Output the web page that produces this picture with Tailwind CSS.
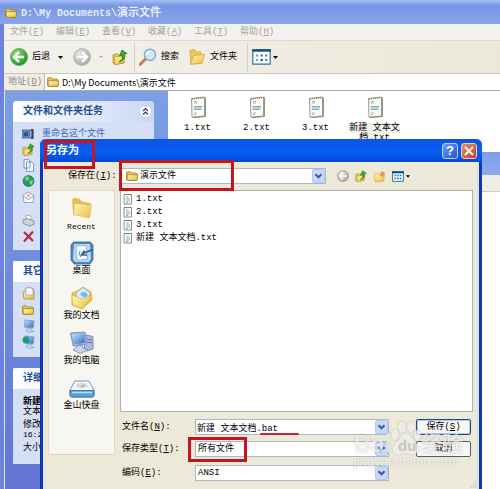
<!DOCTYPE html>
<html lang="zh-CN">
<head>
<meta charset="utf-8">
<meta name="viewport" content="width=device-width, initial-scale=1">
<title>另存为</title>
<script src="https://cdn.jsdelivr.net/npm/@tailwindcss/browser@4"></script>
</head>
<body class="relative h-screen overflow-hidden bg-white font-['Liberation_Mono','Noto_Sans_CJK_SC',monospace] text-[9px] leading-[12px] text-black">
<svg width="0" height="0" class="absolute" aria-hidden="true">
  <defs>
    <linearGradient id="gold" x1="0" y1="0" x2="1" y2="1"><stop offset="0" stop-color="#fff8b8"/><stop offset="1" stop-color="#e8bd45"/></linearGradient>
    <linearGradient id="blue" x1="0" y1="0" x2="1" y2="1"><stop offset="0" stop-color="#c4e8ff"/><stop offset="1" stop-color="#2868c8"/></linearGradient>
    <radialGradient id="green" cx=".35" cy=".3" r=".8"><stop offset="0" stop-color="#8fe07c"/><stop offset="1" stop-color="#188a1c"/></radialGradient>
    <radialGradient id="grey" cx=".35" cy=".3" r=".8"><stop offset="0" stop-color="#e4e4e4"/><stop offset="1" stop-color="#a4a4a4"/></radialGradient>
    <symbol id="folder" viewBox="0 0 12 10"><path d="M.5 2Q.5.7 1.7.7H4.4L5.6 2H10Q11 2 11 3V8.5Q11 9.4 10 9.4H1.6Q.5 9.4.5 8.3Z" fill="#e9c552" stroke="#a8801c" stroke-width=".8"/><path d="M1.2 3.7H11.4V8.3Q11.4 9.3 10.4 9.3H2.2Q1.2 9.3 1.2 8.3Z" fill="url(#gold)" stroke="#a07818" stroke-width=".7"/></symbol>
    <symbol id="openfolder" viewBox="0 0 20 20"><path d="M2 2.5 7.5 1.5 9 4.5 14 4 15 7V17H3Z" fill="#ecc95c" stroke="#cfa63a" stroke-width=".7"/><path d="M6.5 8.5 18.5 7 15.5 17 2.5 18.2Z" fill="url(#gold)" stroke="#d0a23a" stroke-width=".8"/></symbol>
    <symbol id="up" viewBox="0 0 16 16"><path d="M1 6 5 4.5 6.5 6 12 5V14L3 15.5 1 14Z" fill="#ebc84c" stroke="#a98a20" stroke-width=".7"/><path d="M2.5 8 13 6.5 12 14 3 15.5Z" fill="url(#gold)" stroke="#a98a20" stroke-width=".6"/><path d="M7 13Q11.5 11 10 6L7.5 7 10 1 15 4.5 12.6 5.2Q13.5 11.5 7 13Z" fill="#3fae2e" stroke="#16711a" stroke-width=".7"/></symbol>
    <symbol id="doc" viewBox="0 0 16 22"><path d="M1.5 2.5 14.5 1V20L2 21.2Z" fill="#fbfbf6" stroke="#9c9a88" stroke-width="1"/><path d="M14.5 1 15.5 2V20.5L2.8 21.7" fill="none" stroke="#77756a" stroke-width=".8"/><path d="M2 3 14 1.5" stroke="#8d7c63" stroke-width="1.5" stroke-dasharray="1 1"/><path d="M4 5.5H7M4 7H7M4 17H7M4 18.5H6" stroke="#a6aaa8" stroke-width=".9"/><path d="M3.8 10.5H12M3.8 12H12M3.8 13.5H11" stroke="#71a0b4" stroke-width=".9"/></symbol>
    <symbol id="note" viewBox="0 0 10 12"><path d="M1 1.5H8.5V11H1Z" fill="#fafaf8" stroke="#8c8f90"/><path d="M1 1.5H9" stroke="#706f68" stroke-dasharray="1 1"/><path d="M3 4H5.5M3 6H7M3 8H7M3 9.5H5" stroke="#7f9ea8" stroke-width=".8"/></symbol>
    <symbol id="views" viewBox="0 0 19 16"><path d="M.8.8H18.2V15.2H.8Z" fill="#f7faff" stroke="#3a70a8" stroke-width="1.2"/><path d="M.3 1.5H18.7" stroke="#144a8c" stroke-width="2.4"/><g stroke-width="1.8"><path d="M4 6.5H6M4 11H6" stroke="#8b9db0"/><path d="M8.7 6.5H10.7" stroke="#235a9a"/><path d="M8.7 11H10.7" stroke="#342028"/><path d="M13.2 6.5H15.2" stroke="#2b8b47"/><path d="M13.2 11H15.2" stroke="#4c6c9c"/></g></symbol>
    <symbol id="views-sm" viewBox="0 0 12 11"><path d="M.6.6H11.4V10.4H.6Z" fill="#eef8ff" stroke="#347a98"/><path d="M0 1.3H12" stroke="#124e88" stroke-width="2"/><path d="M2.5 4.5H10M2.5 7.5H10" stroke="#2677a6" stroke-width="1.6" stroke-dasharray="1.6 1"/></symbol>
    <symbol id="down" viewBox="0 0 13 14"><rect x=".5" y=".5" width="12" height="13" rx="1.5" fill="#c7d8fb" stroke="#b4c8f0"/><path d="M3.5 5.3 6.5 8.3 9.5 5.3" fill="none" stroke="#3c5c9c" stroke-width="2"/></symbol>
    <symbol id="monitor" viewBox="0 0 14 14"><path d="M3 1 12 2 11 9 2.5 8Z" fill="url(#blue)" stroke="#7393cb" stroke-width=".8"/><path d="M6 9 9 9.3V11L12 12.5 7 13.4 4 11.5Z" fill="#cad4ee" stroke="#7f90ba" stroke-width=".6"/></symbol>
  </defs>
</svg>

<!-- Explorer window -->
<div class="flex h-full flex-col border-l-4 border-[#6b83de] bg-white">
  <header class="-ml-1 flex h-6 shrink-0 items-center gap-1 bg-linear-to-b from-[#a5bdf6] via-[#7795e2] via-25% to-[#8ba6ea] pt-0.5 pl-[5px] font-bold text-[#e5edfd]">
    <svg class="h-[10px] w-3"><use href="#folder"/></svg>
    <h1 class="text-[11px] leading-[14px]"><span class="text-[10px]">D:\My Documents\</span>演示文件</h1>
  </header>
  <nav class="flex h-[17px] shrink-0 items-center border-b border-[#dedbd0] bg-[#f2f1ed] pl-1.5 text-[#a5a39a]">
    <button class="w-[46px] text-left">文件(<u>F</u>)</button>
    <button class="w-[46px] text-left">编辑(<u>E</u>)</button>
    <button class="w-[46px] text-left">查看(<u>V</u>)</button>
    <button class="w-[46px] text-left">收藏(<u>A</u>)</button>
    <button class="w-[46px] text-left">工具(<u>T</u>)</button>
    <button class="w-[46px] text-left">帮助(<u>H</u>)</button>
  </nav>
  <div class="flex h-[33px] shrink-0 items-center border-b border-[#c9c6b9] bg-linear-to-r from-[#f2f1ec] to-[#ece8d9] pl-1.5">
    <button class="flex w-[63px] items-center gap-1"><svg class="size-[18px]" viewBox="0 0 18 18"><circle cx="9" cy="9" r="8.5" fill="url(#green)" stroke="#3c9a3c" stroke-width=".7"/><path d="M9 4 4 9 9 14M4.5 9H14" fill="none" stroke="#fff" stroke-width="2.4"/></svg>后退<svg class="ml-1 h-[3px] w-[5px]" viewBox="0 0 5 3"><path d="M0 0H5L2.5 3Z"/></svg></button>
    <button aria-label="前进" class="flex w-[39px] items-center gap-2"><svg class="size-[18px]" viewBox="0 0 18 18"><circle cx="9" cy="9" r="8.5" fill="url(#grey)" stroke="#a9a9a9" stroke-width=".7"/><path d="M9 4 14 9 9 14M13.5 9H4" fill="none" stroke="#fff" stroke-width="2.4"/></svg><svg class="h-[2px] w-1" viewBox="0 0 4 2"><path d="M0 0H4L2 2Z" fill="#aaa"/></svg></button>
    <button aria-label="向上" class="w-[22px]"><svg class="size-4"><use href="#up"/></svg></button>
    <span class="h-7 w-[5px] border-l border-[#d3d0c4]"></span>
    <button class="flex w-[49px] items-center gap-1 whitespace-nowrap"><svg class="size-[18px] shrink-0" viewBox="0 0 18 18"><path d="M1 16.5 7 10.5" stroke="#c17b50" stroke-width="2.8" stroke-linecap="round"/><circle cx="11" cy="6.8" r="5.6" fill="#c9ecfb" stroke="#8ba9ca" stroke-width="1.5"/><path d="M7.8 7A3.5 3.5 0 0 1 11.5 3.5" fill="none" stroke="#fff" stroke-width="1.6"/></svg>搜索</button>
    <button class="flex w-[59px] items-center gap-1 whitespace-nowrap"><svg class="size-[18px] shrink-0"><use href="#openfolder"/></svg>文件夹</button>
    <span class="h-7 w-[5px] border-l border-[#d3d0c4]"></span>
    <button aria-label="查看方式" class="flex items-center gap-0.5"><svg class="h-4 w-[19px]"><use href="#views"/></svg><svg class="h-[3px] w-[5px]" viewBox="0 0 5 3"><path d="M0 0H5L2.5 3Z"/></svg></button>
  </div>
  <div class="flex h-[17px] shrink-0 items-center border-b border-[#aaa89c] bg-[#efede4]">
    <label for="address" class="w-10 pl-1 text-[#8b8980]">地址(<u>D</u>)</label>
    <div class="relative h-4 flex-1 border-l border-[#bdbbb0] bg-white">
      <svg class="absolute top-[3px] left-0.5 h-[10px] w-3"><use href="#folder"/></svg>
      <input id="address" value="D:\My Documents\演示文件" class="block h-4 w-full bg-transparent pl-[17px] font-['Noto_Sans_CJK_SC',sans-serif] outline-none">
    </div>
  </div>
  <div class="flex min-h-0 flex-1">
    <aside class="flex w-[164px] shrink-0 flex-col gap-[11px] border-l border-[#dbe4fb] bg-linear-to-b from-[#7c9fe6] to-[#6374d4] pt-[10px] pr-[14px] pl-2">
      <section class="h-[149px] shrink-0 overflow-hidden rounded-t bg-[#d5dff6]">
        <div class="flex h-[21px] items-center justify-between bg-linear-to-r from-white to-[#cbd7f7] px-[10px] text-[#24508f]">
          <h2 class="text-[10px] font-bold">文件和文件夹任务</h2>
          <button aria-label="折叠" class="-mr-2"><svg class="size-[13px]" viewBox="0 0 13 13"><circle cx="6.5" cy="6.5" r="6" fill="#fff" stroke="#b9c8e8" stroke-width=".7"/><path d="M4 6 6.5 3.5 9 6M4 9.5 6.5 7 9 9.5" fill="none" stroke="#263b70" stroke-width="1.2"/></svg></button>
        </div>
        <ul class="flex flex-col gap-[3px] pt-[5px] pl-[9px] text-[#3769bb]">
          <li class="flex h-[13px] items-center gap-[7px]"><svg class="h-3 w-[13px] shrink-0" viewBox="0 0 13 12"><path d="M0 2H8V10H0Z" fill="#6282bd" stroke="#405991" stroke-width=".7"/><path d="M2 4.5H6V8H2Z" fill="#294e98"/><path d="M8.5 2H11V10H8.5M10 1V11" fill="none" stroke="#345" stroke-width="1.3"/></svg><a href="#">重命名这个文件</a></li>
          <li class="h-[13px]"><svg class="size-[13px]"><use href="#up"/></svg></li>
          <li class="h-[13px]"><svg class="size-[13px]" viewBox="0 0 13 13"><path d="M2 .7H7L8 2V9H2ZM4.5 3H10L11.5 4.5V12.4H4.5Z" fill="#f6fbff" stroke="#5c88ac" stroke-width=".8"/></svg></li>
          <li class="h-[13px]"><svg class="size-[13px]" viewBox="0 0 13 13"><circle cx="6.5" cy="6" r="5.5" fill="#259b68" stroke="#286b93" stroke-width=".7"/><path d="M3 2.5Q5 1 7 2L6.5 5 4 6ZM7.5 6 11 5 10 9 8 10Z" fill="#7bd874"/></svg></li>
          <li class="h-[13px]"><svg class="size-[13px]" viewBox="0 0 13 13"><path d="M1 4 6 1 12 4.5 11 11.5H2Z" fill="#f8f8fb" stroke="#7d96bd" stroke-width=".8"/><path d="M1 5 6.5 8.5 12 5" fill="none" stroke="#89a3c5"/><path d="M5 3H8V6H5Z" fill="#efc37d"/></svg></li>
          <li class="mt-[7px] h-[13px]"><svg class="size-[13px]" viewBox="0 0 13 13"><path d="M4 1 9 2 8.5 6H4Z" fill="#fff" stroke="#929aa9" stroke-width=".7"/><path d="M1 6 5 4.5 12 7V10L8 12 1 9.5Z" fill="#cdd2da" stroke="#7c8799" stroke-width=".8"/></svg></li>
          <li class="h-[13px]"><svg class="size-[13px]" viewBox="0 0 13 13"><path d="M2 2 11 11M11 1.5 2 11.5" stroke="#bb2941" stroke-width="2.2"/></svg></li>
        </ul>
      </section>
      <section class="h-24 shrink-0 bg-[#d5dff6]">
        <h2 class="flex h-[21px] items-center rounded-t bg-linear-to-r from-white to-[#cbd7f7] px-[10px] text-[10px] font-bold text-[#24508f]">其它位置</h2>
        <ul class="flex flex-col gap-0.5 pt-[5px] pl-[9px]">
          <li><svg class="size-[14px]" viewBox="0 0 14 14"><path d="M1 5 4 4V1H10L12 3V12H2Z" fill="url(#gold)" stroke="#ad8e3b" stroke-width=".8"/><path d="M4 1H9L11 3V8H4Z" fill="#f4f9ff" stroke="#8da5b8" stroke-width=".6"/></svg></li>
          <li><svg class="h-[14px] w-3"><use href="#folder"/></svg></li>
          <li><svg class="size-[14px]"><use href="#monitor"/></svg></li>
          <li><svg class="size-[14px]"><use href="#monitor"/><circle cx="4" cy="5" r="3.5" fill="#229b7c"/></svg></li>
        </ul>
      </section>
      <section class="h-24 shrink-0 bg-[#d5dff6]">
        <h2 class="flex h-[21px] items-center rounded-t bg-linear-to-r from-white to-[#cbd7f7] px-[10px] text-[10px] font-bold text-[#24508f]">详细信息</h2>
        <div class="px-[10px] pt-2 leading-[10px]">
          <p class="font-bold">新建</p>
          <p>文本文档</p>
          <p class="mt-[3px]">修改日期</p>
          <p class="text-[8px]">16:20</p>
          <p class="mt-[3px]">大小:</p>
        </div>
      </section>
    </aside>
    <main class="flex flex-1 flex-col">
      <ul class="flex h-[61px] pt-[5px] text-center leading-[10px]">
        <li class="w-[59px]"><svg class="mx-auto mb-[5px] h-[22px] w-4"><use href="#doc"/></svg>1.txt</li>
        <li class="w-[59px]"><svg class="mx-auto mb-[5px] h-[22px] w-4"><use href="#doc"/></svg>2.txt</li>
        <li class="w-[59px]"><svg class="mx-auto mb-[5px] h-[22px] w-4"><use href="#doc"/></svg>3.txt</li>
        <li class="w-[59px]"><svg class="mx-auto mb-[5px] h-[22px] w-4"><use href="#doc"/></svg><span class="bg-[#f0efe9]">新建 文本文<br>档.txt</span></li>
      </ul>
      <!-- Second window, mostly behind the dialog -->
      <div class="h-[23px] bg-linear-to-b from-[#809de8] to-[#8fa9ee]"></div>
      <div class="h-[17px] border-b border-[#cfccc0] bg-[#efede3]"></div>
      <div class="flex-1 bg-white"></div>
    </main>
  </div>
</div>

<!-- Save As dialog -->
<div role="dialog" aria-labelledby="dlg-title" class="absolute top-[139px] right-[18px] bottom-0 left-10 flex flex-col rounded-t-md border-x-3 border-[#0d37b5] bg-[#ece9d8]">
  <header class="-mx-[3px] flex h-[23px] shrink-0 items-center justify-between rounded-t-md bg-linear-to-b from-[#0c55e4] via-[#0660f4] via-60% to-[#0348cf] pr-[5px] pl-1.5">
    <h2 id="dlg-title" class="text-[11px] font-bold text-white">另存为</h2>
    <div class="flex gap-[3px]">
      <button aria-label="帮助" class="size-4 rounded-[3px] border border-[#b9cdf8] bg-linear-to-br from-[#6f9cf2] to-[#1f55cf] font-['Liberation_Sans',sans-serif] text-[13px] leading-[13px] font-bold text-white">?</button>
      <button aria-label="关闭" class="flex size-4 items-center justify-center rounded-[3px] border border-[#f0c8bd] bg-linear-to-br from-[#ea8c72] to-[#c83c18]"><svg class="size-[10px]" viewBox="0 0 10 10"><path d="M1 1 9 9M9 1 1 9" stroke="#fff" stroke-width="1.8"/></svg></button>
    </div>
  </header>

  <div class="flex flex-1 flex-col border-r-2 border-[#d5e2f8] pr-1 pl-[5px]">
    <div class="flex h-7 shrink-0 items-center">
      <label for="look-in" class="w-[73px] pl-5">保存在(<u>I</u>):</label>
      <div class="relative h-4 flex-1 border border-[#aab8c8] bg-white">
        <svg class="absolute top-0.5 left-1 h-[10px] w-3"><use href="#folder"/></svg>
        <select id="look-in" class="block h-[14px] w-full appearance-none bg-transparent pl-[18px] leading-[14px] outline-none"><option>演示文件</option></select>
        <svg class="pointer-events-none absolute top-0 right-0 h-[14px] w-[13px]"><use href="#down"/></svg>
      </div>
      <div class="flex w-[147px] items-center gap-[6px] pl-[11px]">
        <button aria-label="后退"><svg class="block size-3" viewBox="0 0 18 18"><circle cx="9" cy="9" r="8.5" fill="url(#grey)" stroke="#9c9c94"/><path d="M9 4 4 9 9 14M4.5 9H14" fill="none" stroke="#fff" stroke-width="2.4"/></svg></button>
        <button aria-label="向上一级"><svg class="block size-3"><use href="#up"/></svg></button>
        <button aria-label="新建文件夹"><svg class="block size-[13px]" viewBox="0 0 13 13"><path d="M1 4 5 3 6 5 11 4.5V11L2 12Z" fill="url(#gold)" stroke="#d0aa50" stroke-width=".7"/><circle cx="9.5" cy="4" r="2.4" fill="#e8935c"/></svg></button>
        <button aria-label="视图" class="flex items-center gap-0.5"><svg class="block h-[11px] w-3"><use href="#views-sm"/></svg><svg class="h-[3px] w-1" viewBox="0 0 5 3"><path d="M0 0H5L2.5 3Z"/></svg></button>
      </div>
    </div>

    <div class="flex flex-1 gap-[5px]">
      <nav class="flex h-[265px] w-[67px] shrink-0 flex-col border border-[#dcd9cb] bg-[#f7f6f0] pt-[5px] text-center">
        <button class="flex h-[45px] flex-col items-center gap-0.5"><svg class="h-6 w-[22px]" viewBox="0 0 22 24"><path d="M1.5 3.5 3 2 9 3.5 10 5.5 19.5 7.5 18.5 20.5 2.5 18Z" fill="#e6c04e" stroke="#d9b64f" stroke-width=".6"/><path d="M3.5 7.5 20.5 9 18.5 22 2.5 18.5Z" fill="url(#gold)" stroke="#ddb950" stroke-width=".6"/></svg><span class="text-[8px] leading-[10px]">Recent</span></button>
        <button class="flex h-[45px] flex-col items-center"><svg class="size-6" viewBox="0 0 24 24"><path d="M3.5 1H20.5L23 4V19L20 23H4L1 19V4Z" fill="#4f86bd" stroke="#396a9b" stroke-width=".8"/><path d="M4 3H20L21 18 19 21H5L3 18Z" fill="#b4d8ef"/><path d="M6 5 16 4.5 17.5 18 7 19.5Z" fill="#f5fbfd" stroke="#79a7c7" stroke-width=".7"/><path d="M23 8.5 13 12.5M14.5 9.5 11.5 14 17 14" fill="none" stroke="#365f86" stroke-width="1.7"/><path d="M10 10Q8 14 11 16" fill="none" stroke="#488dc0"/></svg><span>桌面</span></button>
        <button class="flex h-[45px] flex-col items-center"><svg class="size-6" viewBox="0 0 24 24"><path d="M2 7 7 5 13 1 21 6 22 14 12 23 2 19Z" fill="#e8c556" stroke="#d2a63b" stroke-width=".7"/><path d="M6 7 13 1.5 20 7 18 15 8 17Z" fill="#d7efff" stroke="#8bb2cf" stroke-width=".6"/><path d="M10 8Q14 3 18 9 14 14 10 8Z" fill="#77b7e7"/><path d="M2 9 12 13 22 9 12.5 23 2.5 19Z" fill="url(#gold)" stroke="#d5ad43" stroke-width=".7"/></svg><span>我的文档</span></button>
        <button class="flex h-[45px] flex-col items-center"><svg class="h-6 w-[26px]" viewBox="0 0 26 24"><path d="M17 4 24 5.5V18L18 20 15 18Z" fill="#aeb8df" stroke="#6f79ab" stroke-width=".8"/><path d="M18 8 23 9M18 11 23 12" stroke="#6770a2"/><path d="M1.5 2 16 1 17.5 13 4 15Z" fill="#a5b4dd" stroke="#6f85bb" stroke-width=".8"/><path d="M3 3.5 15 2.7 16 11.8 5 13.2Z" fill="url(#blue)"/><path d="M8 15 13 14.2 14 17 19 19 11 22.5 4 19Z" fill="#cbd3ee" stroke="#7886b6" stroke-width=".8"/></svg><span>我的电脑</span></button>
        <button class="flex h-[45px] flex-col items-center"><svg class="h-6 w-[26px]" viewBox="0 0 26 24"><path d="M6 5H20L25 14V19Q25 21 23 21H3Q1 21 1 19V14Z" fill="#f2f6fa" stroke="#7598b9"/><path d="M1 14.5H25V19Q25 21 23 21H3Q1 21 1 19Z" fill="#5ba0de" stroke="#4579aa"/><path d="M3 16.5H23" stroke="#b9dcf7" stroke-width="1.5"/><ellipse cx="13" cy="9.5" rx="6" ry="2.5" fill="#d3dce5"/><path d="M12 11 16 9" stroke="#c07e61"/></svg><span>金山快盘</span></button>
      </nav>

      <div class="min-w-0 flex-1">
        <ul class="h-[222px] overflow-auto border border-[#aeb2a8] bg-white pt-px pl-0.5">
          <li class="flex h-[13px] items-center gap-[3px]"><svg class="h-3 w-[10px]"><use href="#note"/></svg>1.txt</li>
          <li class="flex h-[13px] items-center gap-[3px]"><svg class="h-3 w-[10px]"><use href="#note"/></svg>2.txt</li>
          <li class="flex h-[13px] items-center gap-[3px]"><svg class="h-3 w-[10px]"><use href="#note"/></svg>3.txt</li>
          <li class="flex h-[13px] items-center gap-[3px]"><svg class="h-3 w-[10px]"><use href="#note"/></svg>新建 文本文档.txt</li>
        </ul>
        <form class="grid grid-cols-[75px_1fr_84px] items-center gap-y-[6px] pt-[7px]">
          <label for="fname" class="pl-0.5">文件名(<u>N</u>):</label>
          <div class="relative h-4 border border-[#aab8c8] bg-white">
            <input id="fname" value="新建 文本文档.bat" class="block h-[14px] w-full bg-transparent pl-px outline-none">
            <svg class="pointer-events-none absolute top-0 right-0 h-[14px] w-[13px]"><use href="#down"/></svg>
          </div>
          <button type="button" class="mr-[2px] ml-[27px] h-4 rounded-[2px] border border-[#24477c] bg-[#f7f7f3] leading-[13px] shadow-[inset_0_0_0_1px_#b2caf0]">保存(<u>S</u>)</button>

          <label for="ftype" class="pl-0.5">保存类型(<u>T</u>):</label>
          <div class="relative h-4 border border-[#aab8c8] bg-white">
            <select id="ftype" class="block h-[14px] w-full appearance-none bg-transparent pl-0.5 leading-[14px] outline-none"><option>所有文件</option></select>
            <svg class="pointer-events-none absolute top-0 right-0 h-[14px] w-[13px]"><use href="#down"/></svg>
          </div>
          <button type="button" class="mr-[2px] ml-[27px] h-4 rounded-[2px] border border-[#4a5c70] bg-[#f7f7f3] leading-[13px]">取消</button>

          <label for="enc" class="mt-0.5 pl-0.5">编码(<u>E</u>):</label>
          <div class="relative mt-0.5 h-4 border border-[#aab8c8] bg-white">
            <select id="enc" class="block h-[14px] w-full appearance-none bg-transparent pl-0.5 leading-[14px] outline-none"><option>ANSI</option></select>
            <svg class="pointer-events-none absolute top-0 right-0 h-[14px] w-[13px]"><use href="#down"/></svg>
          </div>
        </form>
      </div>
    </div>
  </div>

  <svg class="absolute right-0.5 bottom-0 size-[7px]" viewBox="0 0 7 7"><path d="M5 1H6M3 3H6M1 5H6" stroke="#b5b19f" stroke-dasharray="1 1"/></svg>

  <!-- Annotation marks -->
  <div class="pointer-events-none absolute top-px left-px h-[29px] w-[51px] border-3 border-[#cb1420]"></div>
  <div class="pointer-events-none absolute top-[21px] left-[76px] h-[31px] w-[115px] border-3 border-[#c4141c]"></div>
  <div class="pointer-events-none absolute top-[298px] left-[145px] h-[25px] w-[59px] border-3 border-[#c4141c]"></div>
  <div class="pointer-events-none absolute top-[294px] left-[217px] h-0.5 w-[39px] rounded-full bg-[#cb2334]"></div>

  <!-- Watermark -->
  <div class="pointer-events-none absolute right-[11px] bottom-[20px] w-[114px] font-['Liberation_Sans','Noto_Sans_CJK_SC',sans-serif] whitespace-nowrap text-white/60 [filter:drop-shadow(0_0_1px_rgb(120_120_110/0.6))]">
    <div class="flex items-end">
      <span class="text-[24px] leading-[22px] font-bold">Bai</span>
      <svg class="h-[34px] w-[30px]" viewBox="0 0 30 34"><g fill="#fff" fill-opacity=".7"><ellipse cx="4" cy="14" rx="3.5" ry="5"/><ellipse cx="11" cy="6" rx="3.7" ry="5"/><ellipse cx="20" cy="6" rx="3.7" ry="5"/><ellipse cx="26.5" cy="14" rx="3.2" ry="5"/><path d="M15 13C20 13 20 19 25 22 31 27 27 34 21 33 17 32 13 32 9 33 2 34-1 27 5 22 10 19 10 13 15 13Z"/></g><text x="7" y="30" font-size="15" font-weight="bold" fill="#c9c8bf">du</text></svg>
      <span class="text-[21px] leading-[22px] font-bold">经验</span>
    </div>
    <div class="text-[13px] leading-[14px]">jingyan.baidu.com</div>
  </div>
</div>
</body>
</html>
